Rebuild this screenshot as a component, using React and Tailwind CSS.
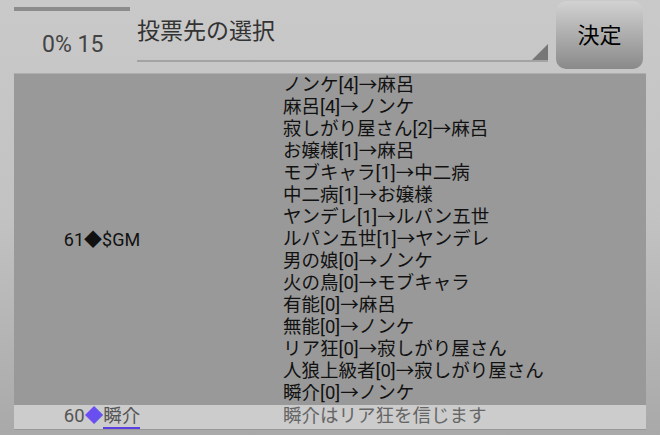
const votes = [
  "ノンケ[4]→麻呂",
  "麻呂[4]→ノンケ",
  "寂しがり屋さん[2]→麻呂",
  "お嬢様[1]→麻呂",
  "モブキャラ[1]→中二病",
  "中二病[1]→お嬢様",
  "ヤンデレ[1]→ルパン五世",
  "ルパン五世[1]→ヤンデレ",
  "男の娘[0]→ノンケ",
  "火の鳥[0]→モブキャラ",
  "有能[0]→麻呂",
  "無能[0]→ノンケ",
  "リア狂[0]→寂しがり屋さん",
  "人狼上級者[0]→寂しがり屋さん",
  "瞬介[0]→ノンケ",
];

const font = { fontFamily: "Roboto, 'Noto Sans CJK JP', sans-serif" };

function App() {
  return (
    <div
      className="h-[435px] w-[660px] overflow-hidden bg-gradient-to-b from-[#c9c9c9] via-[#c2c2c2] to-[#a9a9a9] px-[14px]"
      style={font}
    >
      <div className="flex h-[73px] items-start">
        <div className="flex w-[123px] flex-col">
          <div className="mt-[7px] h-[4px] w-[116px] bg-[#8c8c8c]" />
          <div className="mt-[17px] pl-[28px] text-[23px] leading-[34px] text-[#444]">0% 15</div>
        </div>
        <div className="relative mt-[18px] h-[44px] w-[411px] border-b-2 border-[#a3a3a3]">
          <div className="text-[23px] leading-[28px] text-[#333]">投票先の選択</div>
          <div className="absolute bottom-0 right-0 h-0 w-0 border-b-[16px] border-l-[16px] border-b-[#777] border-l-transparent" />
        </div>
        <button className="ml-[8px] mt-[1px] flex h-[68px] w-[87px] items-center justify-center rounded-[10px] bg-gradient-to-b from-[#d2d2d2] to-[#8a8a8a] text-[22px] text-black">
          決定
        </button>
      </div>

      <div className="border-t border-[#aeaeae]">
        <div className="flex bg-[#999999] pb-[1px]">
          <div className="flex w-[176px] items-center justify-center text-[18px] text-[#111]">61◆$GM</div>
          <div className="pl-[93px] text-[18.5px] leading-[22px] text-[#111]">
            {votes.map((line) => (
              <div key={line}>{line}</div>
            ))}
          </div>
        </div>
        <div className="flex h-[25px] items-center border-b border-[#999] bg-[#cccccc] text-[18.5px] text-[#555]">
          <div className="flex w-[176px] justify-center">
            <span>
              60<span className="text-[#6a4ff0]">◆</span>
              <span className="border-b-2 border-[#5b3fe0] leading-[20px]">瞬介</span>
            </span>
          </div>
          <div className="pl-[93px] text-[#666]">瞬介はリア狂を信じます</div>
        </div>
      </div>
    </div>
  );
}

export default App;
